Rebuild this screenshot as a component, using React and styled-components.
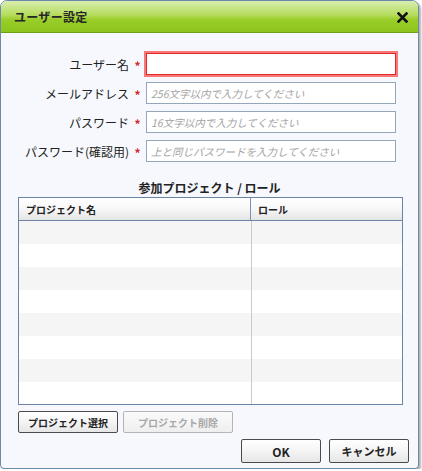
import styled, { createGlobalStyle } from "styled-components";

const GlobalStyle = createGlobalStyle`
  html, body {
    margin: 0;
    padding: 0;
    background: #ffffff;
  }
  body {
    font-family: "Noto Sans CJK JP", "Noto Sans", sans-serif;
    color: #222;
  }
`;

const fields = [
  { label: "ユーザー名", placeholder: "", focused: true },
  { label: "メールアドレス", placeholder: "256文字以内で入力してください" },
  { label: "パスワード", placeholder: "16文字以内で入力してください" },
  { label: "パスワード(確認用)", placeholder: "上と同じパスワードを入力してください" },
];

const rows = Array.from({ length: 8 }, (_, i) => i);

const App = () => {
  return (
    <>
      <GlobalStyle />
      <Window>
        <Header>
          <Title>ユーザー設定</Title>
          <CloseButton aria-label="close">
            <svg width="11" height="11" viewBox="0 0 11 11">
              <path
                d="M1.5 1.5 L9.5 9.5 M9.5 1.5 L1.5 9.5"
                stroke="#111"
                strokeWidth="2.6"
                strokeLinecap="square"
              />
            </svg>
          </CloseButton>
        </Header>

        <Body>
          <Form>
            {fields.map((field) => (
              <FieldRow key={field.label}>
                <Label>{field.label}</Label>
                <Required>*</Required>
                <Input
                  $focused={field.focused}
                  placeholder={field.placeholder}
                  autoFocus={field.focused}
                />
              </FieldRow>
            ))}
          </Form>

          <SectionTitle>参加プロジェクト / ロール</SectionTitle>

          <Table>
            <HeadRow>
              <HeadCell $wide>プロジェクト名</HeadCell>
              <HeadCell>ロール</HeadCell>
            </HeadRow>
            <TableBody>
              {rows.map((i) => (
                <Row key={i} $odd={i % 2 === 0}>
                  <Cell $wide />
                  <Cell />
                </Row>
              ))}
            </TableBody>
          </Table>

          <ProjectButtons>
            <Button $width={100}>プロジェクト選択</Button>
            <Button $width={110} disabled>
              プロジェクト削除
            </Button>
          </ProjectButtons>

          <Footer>
            <Button $width={80} $size={12}>
              OK
            </Button>
            <Button $width={80} $size={11}>
              キャンセル
            </Button>
          </Footer>
        </Body>
      </Window>
    </>
  );
};

export default App;

const Window = styled.div`
  width: 419px;
  height: 469px;
  box-sizing: border-box;
  display: flex;
  flex-direction: column;
  border: 1px solid #6d88a8;
  border-radius: 7px 7px 4px 4px;
  background: #f6f8fd;
  box-shadow: 2px 2px 2px rgba(0, 0, 0, 0.3);
  overflow: hidden;
`;

const Header = styled.div`
  height: 31px;
  flex-shrink: 0;
  display: flex;
  align-items: center;
  justify-content: space-between;
  padding: 0 10px 0 13px;
  background: linear-gradient(#d9eeb0 0%, #b5dc5c 45%, #9acd2a 60%, #8cc51c 100%);
  border-bottom: 1px solid #6f9f12;
`;

const Title = styled.div`
  font-size: 12px;
  font-weight: bold;
  color: #262626;
  letter-spacing: 0.3px;
`;

const CloseButton = styled.div`
  display: flex;
  align-items: center;
  margin-top: 1px;
`;

const Body = styled.div`
  flex: 1;
  display: flex;
  flex-direction: column;
  padding: 20px 9px 0 17px;
`;

const Form = styled.div`
  display: flex;
  flex-direction: column;
  gap: 7px;
  margin-left: -17px;
`;

const FieldRow = styled.div`
  display: grid;
  grid-template-columns: 128px 17px 250px;
  align-items: center;
  height: 22px;
`;

const Label = styled.label`
  text-align: right;
  font-size: 12px;
  color: #222;
  white-space: nowrap;
`;

const Required = styled.span`
  color: #d42828;
  font-size: 12px;
  font-weight: bold;
  text-align: center;
  padding-top: 3px;
`;

const Input = styled.input`
  width: 250px;
  height: 22px;
  box-sizing: border-box;
  border: 1px solid ${(p) => (p.$focused ? "#e02828" : "#93a6ba")};
  box-shadow: ${(p) => (p.$focused ? "0 0 0 2px #fb7878" : "none")};
  background: #fff;
  padding: 0 4px;
  font-family: "Noto Sans CJK JP", "Noto Sans", sans-serif;
  font-size: 11px;
  outline: none;

  &::placeholder {
    color: #a4a4a4;
    font-style: italic;
    font-size: 10.5px;
  }
`;

const SectionTitle = styled.div`
  margin-top: 17px;
  height: 18px;
  line-height: 18px;
  text-align: center;
  font-size: 12px;
  font-weight: bold;
  color: #222;
  padding-right: 8px;
`;

const Table = styled.div`
  width: 385px;
  box-sizing: border-box;
  border: 1px solid #6b84a3;
  background: #fff;
`;

const HeadRow = styled.div`
  display: flex;
  height: 22px;
  border-bottom: 1px solid #6b84a3;
  background: linear-gradient(#ffffff 0%, #f7f7f7 50%, #e4e4e4 100%);
`;

const HeadCell = styled.div`
  width: ${(p) => (p.$wide ? "232px" : "auto")};
  flex: ${(p) => (p.$wide ? "none" : "1")};
  box-sizing: border-box;
  border-right: ${(p) => (p.$wide ? "1px solid #7b90aa" : "none")};
  padding-left: 7px;
  display: flex;
  align-items: center;
  font-size: 10px;
  font-weight: bold;
  color: #222;
`;

const TableBody = styled.div`
  height: 183px;
  overflow: hidden;
`;

const Row = styled.div`
  display: flex;
  height: 23px;
  background: ${(p) => (p.$odd ? "#f5f5f5" : "#ffffff")};
`;

const Cell = styled.div`
  width: ${(p) => (p.$wide ? "233px" : "auto")};
  flex: ${(p) => (p.$wide ? "none" : "1")};
  box-sizing: border-box;
  border-right: ${(p) => (p.$wide ? "1px solid #cacaca" : "none")};
`;

const ProjectButtons = styled.div`
  display: flex;
  gap: 5px;
  margin-top: 6px;
`;

const Footer = styled.div`
  display: flex;
  justify-content: flex-end;
  gap: 8px;
  margin-top: 6px;
`;

const Button = styled.button`
  width: ${(p) => p.$width}px;
  height: ${(p) => (p.$size ? 24 : 22)}px;
  box-sizing: border-box;
  border: 1px solid #4a4a4a;
  border-radius: 2px;
  background: linear-gradient(#ffffff 0%, #f4f4f4 50%, #e6e6e6 100%);
  font-family: "Noto Sans CJK JP", "Noto Sans", sans-serif;
  font-size: ${(p) => p.$size || 10}px;
  font-weight: bold;
  color: #222;
  padding: 0;
  cursor: pointer;

  &:disabled {
    border-color: #b4b4b4;
    color: #a8a8a8;
    background: linear-gradient(#fafafa, #efefef);
    cursor: default;
  }
`;
